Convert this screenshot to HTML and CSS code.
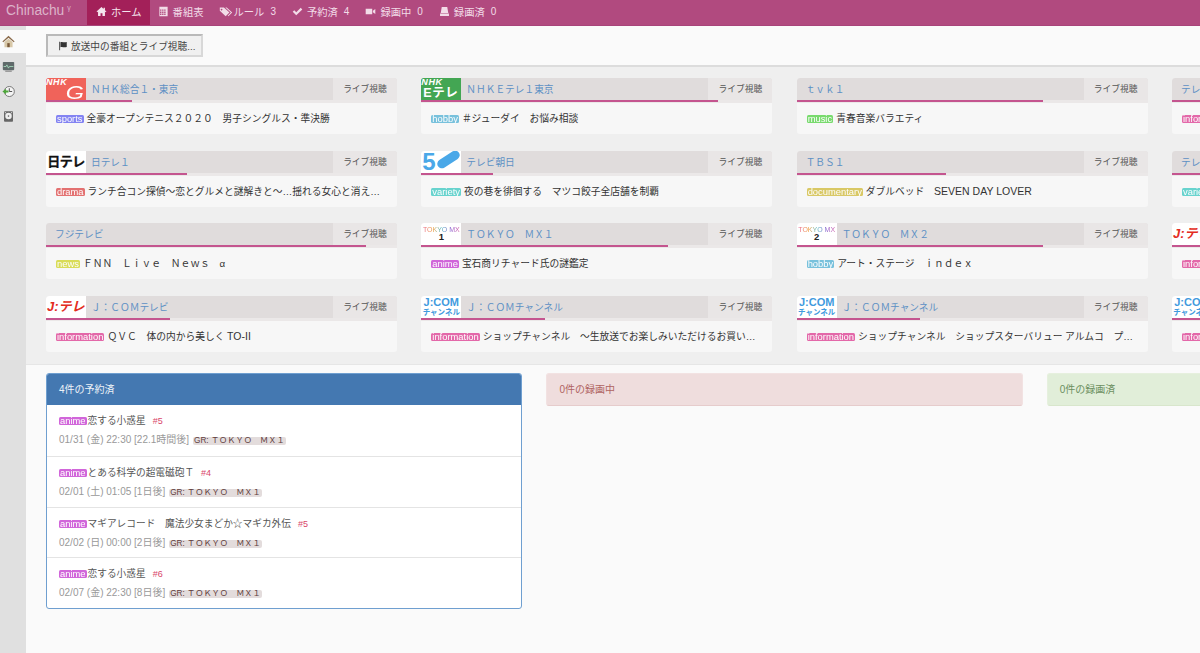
FILE: index.html
```html
<!DOCTYPE html>
<html lang="ja">
<head>
<meta charset="utf-8">
<title>Chinachu</title>
<link rel="stylesheet" href="styles.css">
</head>
<body>
<header class="nav">
  <div class="brand">Chinachu<sup>γ</sup></div>
  <a class="nav-item active"><svg class="ni" viewBox="0 0 16 16"><path d="M8 1.500 0.800 8l1 1L3 8v6.500h3.600v-4h2.800v4H13V8l1.200 1 1-1L13 6V2.500h-2V4.200z"/></svg>ホーム</a>
  <a class="nav-item"><svg class="ni" viewBox="0 0 16 16"><path d="M2 1h12v14H2zM3 5v2h2V5zm3 0v2h2V5zm3 0v2h2V5zm-6 3v2h2V8zm3 0v2h2V8zm3 0v2h2V8zm-6 3v2h2v-2zm3 0v2h2v-2zm3 0v2h2v-2z" fill-rule="evenodd"/></svg>番組表</a>
  <a class="nav-item"><svg class="ni ni-wide" viewBox="0 0 20 16"><path d="M1 2h6l8 7.500-5.500 5.500L1 7zM3.500 4a1.200 1.200 0 1 0 .1 0zM9 2h2l8 7.500-5.500 5.500-1-1 4.500-4.500z" fill-rule="evenodd"/></svg>ルール<span class="count">3</span></a>
  <a class="nav-item"><svg class="ni" viewBox="0 0 16 16"><path d="M1 8.500 3.300 6.200 6.200 9.100 12.700 2.600 15 5 6.200 13.500z"/></svg>予約済<span class="count">4</span></a>
  <a class="nav-item"><svg class="ni" viewBox="0 0 16 16"><path d="M1 4h9.500v8H1zM11.500 7l3.500-2.500v7L11.500 9z"/></svg>録画中<span class="count">0</span></a>
  <a class="nav-item"><svg class="ni" viewBox="0 0 16 16"><path d="M4 1.500h8l1.500 8.500h-11zM1.500 11h13v3.500h-13z"/></svg>録画済<span class="count">0</span></a>
</header>

<div class="layout">
  <aside class="side">
    <div class="side-item current"><svg viewBox="0 0 16 16" class="si"><path d="M8 1 0.500 8l1 1L8 3.500 14.500 9l1-1z" fill="#8a6a4a"/><path d="M3 8.500 8 4.500l5 4V15H3z" fill="#d8c8a8"/><rect x="6.500" y="10" width="3" height="5" fill="#7a5a3a"/></svg></div>
    <div class="side-item"><svg viewBox="0 0 16 16" class="si"><rect x="1" y="2.500" width="14" height="10" rx="1" fill="#5f6a6a"/><path d="M2 8h3l1-2 2 4 1-2h5" fill="none" stroke="#a8e0c0" stroke-width="1"/><rect x="4" y="13" width="8" height="1.500" fill="#888"/></svg></div>
    <div class="side-item"><svg viewBox="0 0 16 16" class="si"><circle cx="9" cy="8" r="6.200" fill="#f4f4f4" stroke="#777" stroke-width="1.200"/><path d="M9 4v4h3.500" fill="none" stroke="#333" stroke-width="1"/><path d="M0.500 8 5 4.500v2.200h3v2.600H5v2.200z" fill="#4ea63a"/></svg></div>
    <div class="side-item"><svg viewBox="0 0 16 16" class="si"><rect x="2.500" y="1.500" width="11" height="13" rx="1" fill="#666"/><circle cx="8" cy="7.500" r="4" fill="#eee"/><circle cx="8" cy="7.500" r="1" fill="#666"/><rect x="3.500" y="2.500" width="1.500" height="1.500" fill="#ccc"/><rect x="11" y="2.500" width="1.500" height="1.500" fill="#ccc"/></svg></div>
  </aside>

  <main class="main">
    <div class="toolbar">
      <button class="btn"><svg class="flag" viewBox="0 0 12 12"><path d="M1.500 1h1v10h-1zM3 1.500c2-.8 3 .6 7.500-.2v6c-4.500.8-5.500-.6-7.500.2z"/></svg>放送中の番組とライブ視聴...</button>
    </div>

    <section class="onair">
      <div class="grid">
        <article class="card">
          <div class="head">
            <span class="logo logo-nhkg"><b>NHK</b><i>G</i></span>
            <span class="ch">ＮＨＫ総合１・東京</span>
            <a class="live">ライブ視聴</a>
          </div>
          <div class="bar"><span class="fill" style="width:24.500%"></span></div>
          <div class="body"><span class="tag sports">sports</span>全豪オープンテニス２０２０　男子シングルス・準決勝</div>
        </article>
        <article class="card">
          <div class="head">
            <span class="logo logo-nhke"><b>NHK</b><i>Eテレ</i></span>
            <span class="ch">ＮＨＫＥテレ１東京</span>
            <a class="live">ライブ視聴</a>
          </div>
          <div class="bar"><span class="fill" style="width:84.500%"></span></div>
          <div class="body"><span class="tag hobby">hobby</span>＃ジューダイ　お悩み相談</div>
        </article>
        <article class="card">
          <div class="head">
            <span class="ch plain">ｔｖｋ１</span>
            <a class="live">ライブ視聴</a>
          </div>
          <div class="bar"><span class="fill" style="width:70.300%"></span></div>
          <div class="body"><span class="tag music">music</span>青春音楽バラエティ</div>
        </article>
        <article class="card">
          <div class="head">
            <span class="ch plain">テレビ神奈川</span>
            <a class="live">ライブ視聴</a>
          </div>
          <div class="bar"><span class="fill" style="width:70%"></span></div>
          <div class="body"><span class="tag information">information</span>テレビショッピング</div>
        </article>

        <article class="card">
          <div class="head">
            <span class="logo logo-ntv">日テレ</span>
            <span class="ch">日テレ１</span>
            <a class="live">ライブ視聴</a>
          </div>
          <div class="bar"><span class="fill" style="width:40.200%"></span></div>
          <div class="body"><span class="tag drama">drama</span>ランチ合コン探偵～恋とグルメと謎解きと～…揺れる女心と消え…</div>
        </article>
        <article class="card">
          <div class="head">
            <span class="logo logo-ex"><b>5</b><i></i></span>
            <span class="ch">テレビ朝日</span>
            <a class="live">ライブ視聴</a>
          </div>
          <div class="bar"><span class="fill" style="width:20.300%"></span></div>
          <div class="body"><span class="tag variety">variety</span>夜の巷を徘徊する　マツコ餃子全店舗を制覇</div>
        </article>
        <article class="card">
          <div class="head">
            <span class="ch plain">ＴＢＳ１</span>
            <a class="live">ライブ視聴</a>
          </div>
          <div class="bar"><span class="fill" style="width:42.500%"></span></div>
          <div class="body"><span class="tag documentary">documentary</span>ダブルベッド　<span class="lat">SEVEN DAY LOVER</span></div>
        </article>
        <article class="card">
          <div class="head">
            <span class="ch plain">テレビ東京</span>
            <a class="live">ライブ視聴</a>
          </div>
          <div class="bar"><span class="fill" style="width:40%"></span></div>
          <div class="body"><span class="tag variety">variety</span>バラエティ番組</div>
        </article>

        <article class="card">
          <div class="head">
            <span class="ch plain">フジテレビ</span>
            <a class="live">ライブ視聴</a>
          </div>
          <div class="bar"><span class="fill" style="width:91.300%"></span></div>
          <div class="body"><span class="tag news">news</span>ＦＮＮ　Ｌｉｖｅ　Ｎｅｗｓ　α</div>
        </article>
        <article class="card">
          <div class="head">
            <span class="logo logo-mx"><b>TOKYO MX</b><i>1</i></span>
            <span class="ch">ＴＯＫＹＯ　ＭＸ１</span>
            <a class="live">ライブ視聴</a>
          </div>
          <div class="bar"><span class="fill" style="width:70.300%"></span></div>
          <div class="body"><span class="tag anime">anime</span>宝石商リチャード氏の謎鑑定</div>
        </article>
        <article class="card">
          <div class="head">
            <span class="logo logo-mx"><b>TOKYO MX</b><i>2</i></span>
            <span class="ch">ＴＯＫＹＯ　ＭＸ２</span>
            <a class="live">ライブ視聴</a>
          </div>
          <div class="bar"><span class="fill" style="width:70.300%"></span></div>
          <div class="body"><span class="tag hobby">hobby</span>アート・ステージ　ｉｎｄｅｘ</div>
        </article>
        <article class="card">
          <div class="head">
            <span class="logo logo-jt">J:テレ</span>
            <span class="ch">Ｊ：ＣＯＭテレビ</span>
            <a class="live">ライブ視聴</a>
          </div>
          <div class="bar"><span class="fill" style="width:35%"></span></div>
          <div class="body"><span class="tag information">information</span>ＱＶＣ</div>
        </article>

        <article class="card">
          <div class="head">
            <span class="logo logo-jt">J:テレ</span>
            <span class="ch">Ｊ：ＣＯＭテレビ</span>
            <a class="live">ライブ視聴</a>
          </div>
          <div class="bar"><span class="fill" style="width:35.200%"></span></div>
          <div class="body"><span class="tag information">information</span>ＱＶＣ　体の内から美しく <span class="lat">TO-II</span></div>
        </article>
        <article class="card">
          <div class="head">
            <span class="logo logo-jc"><b>J:COM</b><i>チャンネル</i></span>
            <span class="ch">Ｊ：ＣＯＭチャンネル</span>
            <a class="live">ライブ視聴</a>
          </div>
          <div class="bar"><span class="fill" style="width:35.200%"></span></div>
          <div class="body"><span class="tag information">information</span>ショップチャンネル　～生放送でお楽しみいただけるお買い…</div>
        </article>
        <article class="card">
          <div class="head">
            <span class="logo logo-jc"><b>J:COM</b><i>チャンネル</i></span>
            <span class="ch">Ｊ：ＣＯＭチャンネル</span>
            <a class="live">ライブ視聴</a>
          </div>
          <div class="bar"><span class="fill" style="width:35.200%"></span></div>
          <div class="body"><span class="tag information">information</span>ショップチャンネル　ショップスターバリュー アルムコ　プ…</div>
        </article>
        <article class="card">
          <div class="head">
            <span class="logo logo-jc"><b>J:COM</b><i>チャンネル</i></span>
            <span class="ch">Ｊ：ＣＯＭチャンネル</span>
            <a class="live">ライブ視聴</a>
          </div>
          <div class="bar"><span class="fill" style="width:35.200%"></span></div>
          <div class="body"><span class="tag information">information</span>ショップチャンネル</div>
        </article>
      </div>
    </section>

    <section class="panels">
      <div class="panel blue">
        <div class="panel-head">4件の予約済</div>
        <ul class="list">
          <li>
            <div class="title"><span class="tag anime">anime</span>恋する小惑星<span class="ep">#5</span></div>
            <div class="meta">01/31 (金) 22:30 [22.1時間後]<span class="src">GR: ＴＯＫＹＯ　ＭＸ１</span></div>
          </li>
          <li>
            <div class="title"><span class="tag anime">anime</span>とある科学の超電磁砲Ｔ<span class="ep">#4</span></div>
            <div class="meta">02/01 (土) 01:05 [1日後]<span class="src">GR: ＴＯＫＹＯ　ＭＸ１</span></div>
          </li>
          <li>
            <div class="title"><span class="tag anime">anime</span>マギアレコード　魔法少女まどか☆マギカ外伝<span class="ep">#5</span></div>
            <div class="meta">02/02 (日) 00:00 [2日後]<span class="src">GR: ＴＯＫＹＯ　ＭＸ１</span></div>
          </li>
          <li>
            <div class="title"><span class="tag anime">anime</span>恋する小惑星<span class="ep">#6</span></div>
            <div class="meta">02/07 (金) 22:30 [8日後]<span class="src">GR: ＴＯＫＹＯ　ＭＸ１</span></div>
          </li>
        </ul>
      </div>
      <div class="panel red"><div class="panel-head">0件の録画中</div></div>
      <div class="panel green"><div class="panel-head">0件の録画済</div></div>
    </section>
  </main>
</div>
</body>
</html>
```

FILE: styles.css
```css
* { box-sizing: border-box; }
html, body { margin: 0; height: 653px; overflow: hidden; }
body {
  font-family: "Liberation Sans", "Noto Sans CJK JP", sans-serif;
  font-size: 11px;
  color: #333;
  background: #fafafa;
}
.nav {
  height: 26px;
  display: flex;
  background: #b14a7f;
  border-bottom: 1px solid #a8447a;
  color: #f2dce8;
  padding-left: 6px;
}
.brand {
  width: 81px;
  flex: none;
  font-size: 13.800px;
  line-height: 22px;
  color: #dcb3ca;
}
.brand sup { font-size: 7px; line-height: 0; vertical-align: 5px; margin-left: 3px; }
.nav-item {
  display: flex;
  align-items: center;
  height: 25px;
  padding: 0 8px 2px;
  font-size: 10.300px;
  white-space: nowrap;
}
.nav-item.active { background: #a32059; color: #f5e6ee; padding-left: 9px; padding-right: 8px; }
.ni { width: 11px; height: 11px; fill: currentColor; margin-right: 4px; flex: none; }
.ni-wide { width: 14px; margin-right: 0; }
.count { font-size: 10px; margin-left: 6px; }
.layout { display: flex; height: 627px; }
.side { width: 26px; background: #e0e0e0; flex: none; padding-top: 4px; }
.side-item { height: 25px; padding: 1px 0 0 2px; display: flex; align-items: center; }
.side-item.current { background: #fafafa; height: 23px; padding-top: 0; }
.si { width: 13px; height: 13px; }
.main { flex: 1; min-width: 0; overflow: hidden; }
.toolbar {
  height: 41px;
  padding: 8px 20px 0;
  background: #fafafa;
  border-bottom: 2px solid #dcdcdc;
}
.btn {
  display: flex;
  align-items: center;
  width: 157px;
  height: 23px;
  padding: 0 0 0 10px;
  font: inherit;
  font-size: 9.700px;
  color: #444;
  background: #f0f0f0;
  border: 2px solid #d8d8d8;
  border-left-color: #b9b9b9;
  border-top-color: #b9b9b9;
}
.flag { width: 10px; height: 10px; fill: #333; margin-right: 3px; flex: none; }
.onair {
  height: 298px;
  padding: 11px 0 0 20px;
  background: #efefef;
  border-bottom: 1px solid #e6e6e6;
}
.grid {
  display: grid;
  grid-template-columns: repeat(4, 351px);
  column-gap: 24.330px;
  row-gap: 16.700px;
  width: 1500px;
}
.card { height: 56px; background: #f7f7f7; border-radius: 3px; overflow: hidden; }
.head { display: flex; height: 22px; background: #e0dcdc; }
.logo { width: 40px; height: 22px; flex: none; background: #fff; overflow: hidden; display: block; white-space: nowrap; }
.logo b, .logo i { display: block; font-style: normal; }
.ch {
  flex: 1;
  min-width: 0;
  font-size: 9.700px;
  line-height: 23px;
  color: #5d90c4;
  padding-left: 5px;
  white-space: nowrap;
  overflow: hidden;
}
.ch.plain { padding-left: 9px; }
.live {
  width: 64px;
  flex: none;
  background: #e9e6e6;
  font-size: 8.750px;
  line-height: 22px;
  text-align: center;
  color: #555;
}
.bar { height: 3px; padding-bottom: 1px; background: #ebe8e8; }
.fill { display: block; height: 2px; background: #c4558f; }
.body {
  padding: 0 10px;
  font-size: 9.750px;
  line-height: 31px;
  color: #333;
  white-space: nowrap;
  overflow: hidden;
}
.lat { font-size: 10.500px; }
.tag {
  display: inline-block;
  font-size: 9.400px;
  line-height: 8px;
  height: 8px;
  padding: 0 1px;
  margin-right: 3px;
  border-radius: 1.500px;
  color: #fff;
  vertical-align: 0;
  opacity: .85;
}
.sports { background: #6f6ff2; }
.hobby { background: #62b8d8; }
.music { background: #62d655; }
.information { background: #e0509c; }
.drama { background: #e05a5a; }
.variety { background: #50cdc8; }
.documentary { background: #d4c04c; }
.news { background: #d4d83c; }
.anime { background: #ca4cd4; }

.logo-nhkg { background: #f0635a; color: #fff; position: relative; overflow: visible; }
.logo-nhkg b { font-size: 9px; line-height: 9px; font-style: italic; letter-spacing: .6px; }
.logo-nhkg i { position: absolute; right: 2px; bottom: 0; font-size: 18px; line-height: 13px; font-weight: 400; font-style: italic; transform: scaleX(1.300); transform-origin: right bottom; }
.logo-nhke { background: #43a653; color: #fff; }
.logo-nhke b { font-size: 9px; line-height: 8px; font-style: italic; letter-spacing: .6px; }
.logo-nhke i { font-size: 12.500px; line-height: 14px; font-weight: 700; letter-spacing: .6px; padding-left: 2px; }
.logo-ntv { color: #111; font-size: 13px; line-height: 22px; font-weight: 700; text-align: center; letter-spacing: -.5px; -webkit-text-stroke: .3px #111; }
.logo-ex { display: flex; align-items: center; padding-left: 1px; }
.logo-ex b { color: #4aa8e8; font-size: 24px; line-height: 22px; }
.logo-ex i { width: 25px; height: 9px; margin-top: -4px; border-radius: 5px; background: #4aa8e8; transform: rotate(-33deg); flex: none; }
.logo-mx { text-align: center; }
.logo-mx b {
  font-size: 7px;
  line-height: 9px;
  padding-top: 2px;
  height: 9px;
  font-weight: 400;
  background: linear-gradient(90deg, #e85a9a, #f0a040 30%, #50b8c0 50%, #9060d0 75%, #e060a0);
  -webkit-background-clip: text;
  background-clip: text;
  color: transparent;
}
.logo-mx i { font-size: 9.500px; line-height: 9px; font-weight: 700; color: #222; }
.logo-jt { color: #e32c22; font-size: 13px; line-height: 22px; font-weight: 700; font-style: italic; padding-left: 1px; }
.logo-jc { color: #3f9ade; text-align: center; font-weight: 700; }
.logo-jc b { font-size: 11px; line-height: 12px; }
.logo-jc i { font-size: 7.500px; line-height: 10px; }

.panels { display: flex; padding: 8px 20px 0; gap: 24px; width: 1500px; }
.panel {
  width: 476.400px;
  flex: none;
  border: 1px solid #6f9fd0;
  border-radius: 3px;
  background: #fff;
  overflow: hidden;
}
.panel-head { height: 31px; padding: 0 12px; font-size: 10px; line-height: 31px; }
.panel.blue .panel-head { background: #4478b1; color: #eef3f8; }
.panel.red { height: 33px; border-color: #f2e2e2; border-bottom-color: #e6cccc; background: #efdddd; }
.panel.red .panel-head { color: #b06462; }
.panel.green { height: 33px; border-color: #e6f0de; border-bottom-color: #d8e6cc; background: #e1eed9; }
.panel.green .panel-head { color: #6b8f60; }
.list { list-style: none; margin: 0; padding: 0; }
.list li { height: 50.800px; padding: 7px 12px 0; border-top: 1px solid #e4e4e4; }
.list li:first-child { border-top: 0; }
.title { font-size: 9.700px; line-height: 18px; color: #555; white-space: nowrap; }
.title .tag { margin-right: 1px; }
.ep { color: #d9466a; font-size: 9px; margin-left: 7px; }
.meta { font-size: 10px; line-height: 20px; color: #999; white-space: nowrap; }
.src {
  display: inline-block;
  margin-left: 4px;
  padding: 0 1px;
  height: 8px;
  font-size: 8.200px;
  line-height: 8px;
  color: #5f3d3d;
  background: #e3dcdc;
  border-radius: 2px;
}
```
